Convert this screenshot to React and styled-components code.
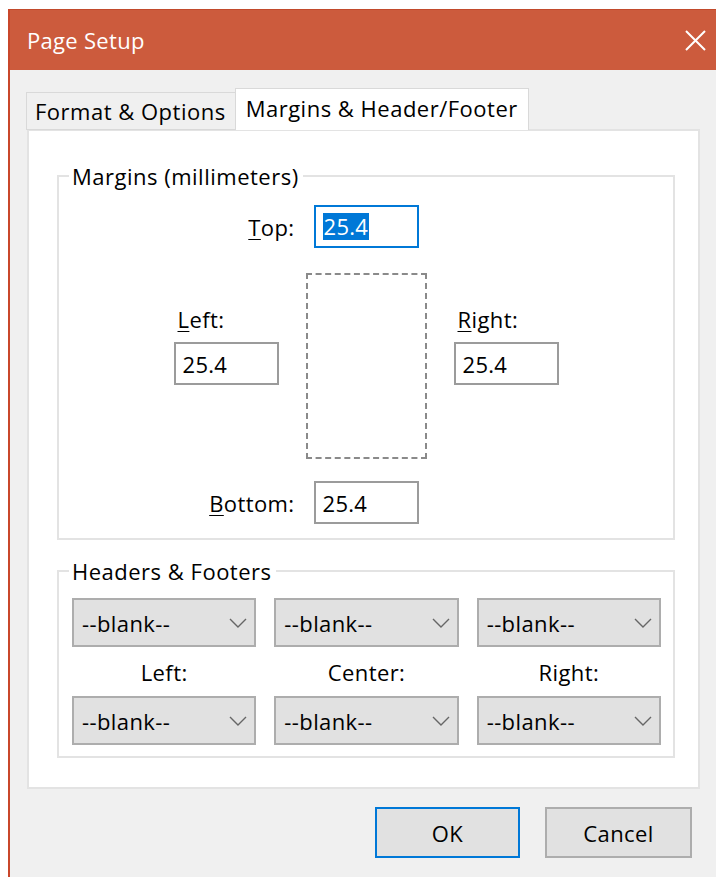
import React from 'react';
import styled, { createGlobalStyle } from 'styled-components';

const GlobalStyle = createGlobalStyle`
  html, body {
    margin: 0;
    padding: 0;
    background: #ffffff;
  }
  body {
    font-family: "Open Sans", "Noto Sans", Arial, sans-serif;
    font-size: 22px;
    color: #000;
  }
`;

const Screen = styled.div`
  width: 716px;
  height: 877px;
  padding: 9px 0 0 8px;
  box-sizing: border-box;
  overflow: hidden;
`;

const Window = styled.div`
  width: 708px;
  height: 880px;
  box-sizing: border-box;
  background: #f0f0f0;
  border-left: 2px solid #c9472b;
  display: flex;
  flex-direction: column;
`;

const TitleBar = styled.div`
  height: 61px;
  flex: none;
  background: #cc5b3d;
  border-top: 1px solid #c24a2c;
  box-sizing: border-box;
  display: flex;
  align-items: center;
  justify-content: space-between;
  padding: 0 10px 0 17px;
  color: #fff;
  font-size: 22px;
  letter-spacing: 0.3px;
`;

const CloseButton = styled.div`
  width: 21px;
  height: 21px;
  display: flex;
  margin-top: 1px;
`;

const Body = styled.div`
  padding: 18px 0 0 16px;
  flex: 1;
  display: flex;
  flex-direction: column;
`;

const TabStrip = styled.div`
  display: flex;
  align-items: flex-end;
  height: 42px;
  position: relative;
  z-index: 1;
  margin-bottom: -1px;
`;

const Tab = styled.div`
  box-sizing: border-box;
  height: ${p => (p.$active ? '42px' : '38px')};
  padding: ${p => (p.$active ? '0 10px 3px 10px' : '0 9px 0 8px')};
  background: ${p => (p.$active ? '#ffffff' : '#f0f0f0')};
  border: 1px solid #d9d9d9;
  border-bottom: ${p => (p.$active ? 'none' : '1px solid #d9d9d9')};
  border-right: ${p => (p.$active ? '1px solid #d9d9d9' : 'none')};
  display: flex;
  align-items: center;
  letter-spacing: 0.5px;
  white-space: nowrap;
`;

const Panel = styled.div`
  margin-left: 1px;
  width: 673px;
  height: 660px;
  box-sizing: border-box;
  background: #fff;
  border: 2px solid #e3e3e3;
  padding: 32px 23px 0 28px;
  display: flex;
  flex-direction: column;
`;

const Group = styled.fieldset`
  margin: 0;
  border: 2px solid #e3e3e3;
  padding: ${p => p.$pad};
  min-width: 0;
  height: ${p => p.$height};
  box-sizing: border-box;
  margin-top: ${p => p.$top || '0'};
`;

const Legend = styled.legend`
  padding: 0 4px 0 3px;
  margin-left: ${p => p.$offset || '10px'};
  line-height: 26px;
  letter-spacing: 0.5px;
`;

const FieldRow = styled.div`
  display: grid;
  grid-template-columns: 1fr 105px 1fr;
  align-items: center;
  margin-top: ${p => p.$top};
`;

const Label = styled.span`
  line-height: 26px;
  letter-spacing: 0.4px;
  justify-self: ${p => p.$align || 'start'};
  margin-right: ${p => p.$gap || '0'};
  margin-left: ${p => p.$indent || '0'};
`;

const AccessKey = styled.u`
  text-decoration-thickness: 1px;
  text-underline-offset: 3px;
`;

const TextBox = styled.div`
  width: 105px;
  height: 43px;
  box-sizing: border-box;
  border: 2px solid ${p => (p.$focused ? '#0078d7' : '#9b9b9b')};
  background: #fff;
  display: flex;
  align-items: center;
  padding-left: 7px;
  letter-spacing: 0.3px;
`;

const Selected = styled.span`
  background: #0078d7;
  color: #fff;
  line-height: 27px;
  padding: 0 1px;
`;

const MiddleRow = styled.div`
  display: grid;
  grid-template-columns: 1fr 121px 1fr;
  column-gap: 27px;
  margin-top: 25px;
`;

const SideField = styled.div`
  justify-self: ${p => p.$side};
  display: flex;
  flex-direction: column;
  gap: 10px;
  margin-top: 33px;
`;

const PageOutline = styled.div`
  height: 186px;
  border: 2px dashed #8a8a8a;
  box-sizing: border-box;
`;

const SelectGrid = styled.div`
  display: grid;
  grid-template-columns: repeat(3, 1fr);
  column-gap: 18px;
  align-items: center;
  justify-items: center;
`;

const Dropdown = styled.div`
  width: 100%;
  height: 49px;
  box-sizing: border-box;
  background: #e1e1e1;
  border: 2px solid #adadad;
  display: flex;
  align-items: center;
  justify-content: space-between;
  padding: 0 7px 0 8px;
  letter-spacing: 0.4px;
`;

const SlotLabel = styled.div`
  height: 49px;
  display: flex;
  align-items: center;
  letter-spacing: 0.4px;
`;

const Footer = styled.div`
  display: flex;
  gap: 25px;
  padding: 18px 0 0 349px;
`;

const Button = styled.button`
  width: ${p => p.$width};
  height: 51px;
  box-sizing: border-box;
  background: #e1e1e1;
  border: 2px solid ${p => (p.$default ? '#0078d7' : '#adadad')};
  font-family: inherit;
  font-size: 22px;
  letter-spacing: 0.4px;
  color: #000;
  padding: 0;
`;

const Chevron = () => (
  <svg width="18" height="10" viewBox="0 0 18 10">
    <path d="M1 1 L9 9 L17 1" fill="none" stroke="#666" strokeWidth="1.4" />
  </svg>
);

const CloseIcon = () => (
  <svg width="21" height="21" viewBox="0 0 21 21">
    <path d="M1 1 L20 20 M20 1 L1 20" stroke="#fff" strokeWidth="2" />
  </svg>
);

const Select = ({ value }) => (
  <Dropdown>
    <span>{value}</span>
    <Chevron />
  </Dropdown>
);

export default function App() {
  const slots = ['Left:', 'Center:', 'Right:'];

  return (
    <>
      <GlobalStyle />
      <Screen>
        <Window>
          <TitleBar>
            <span>Page Setup</span>
            <CloseButton>
              <CloseIcon />
            </CloseButton>
          </TitleBar>
          <Body>
            <TabStrip>
              <Tab>Format &amp; Options</Tab>
              <Tab $active>Margins &amp; Header/Footer</Tab>
            </TabStrip>
            <Panel>
              <Group $pad="0" $height="377px">
                <Legend>Margins (millimeters)</Legend>
                <FieldRow $top="16px">
                  <Label $align="end" $gap="19px">
                    <AccessKey>T</AccessKey>op:
                  </Label>
                  <TextBox $focused>
                    <Selected>25.4</Selected>
                  </TextBox>
                </FieldRow>
                <MiddleRow>
                  <SideField $side="end">
                    <Label $indent="4px">
                      <AccessKey>L</AccessKey>eft:
                    </Label>
                    <TextBox>25.4</TextBox>
                  </SideField>
                  <PageOutline />
                  <SideField $side="start">
                    <Label $indent="4px">
                      <AccessKey>R</AccessKey>ight:
                    </Label>
                    <TextBox>25.4</TextBox>
                  </SideField>
                </MiddleRow>
                <FieldRow $top="22px">
                  <Label $align="end" $gap="19px">
                    <AccessKey>B</AccessKey>ottom:
                  </Label>
                  <TextBox>25.4</TextBox>
                </FieldRow>
              </Group>
              <Group $pad="14px 12px 0 13px" $height="200px" $top="18px">
                <Legend $offset="-3px">Headers &amp; Footers</Legend>
                <SelectGrid>
                  {slots.map(s => (
                    <Select key={'h' + s} value="--blank--" />
                  ))}
                  {slots.map(s => (
                    <SlotLabel key={'l' + s}>{s}</SlotLabel>
                  ))}
                  {slots.map(s => (
                    <Select key={'f' + s} value="--blank--" />
                  ))}
                </SelectGrid>
              </Group>
            </Panel>
            <Footer>
              <Button $default $width="145px">OK</Button>
              <Button $width="147px">Cancel</Button>
            </Footer>
          </Body>
        </Window>
      </Screen>
    </>
  );
}
